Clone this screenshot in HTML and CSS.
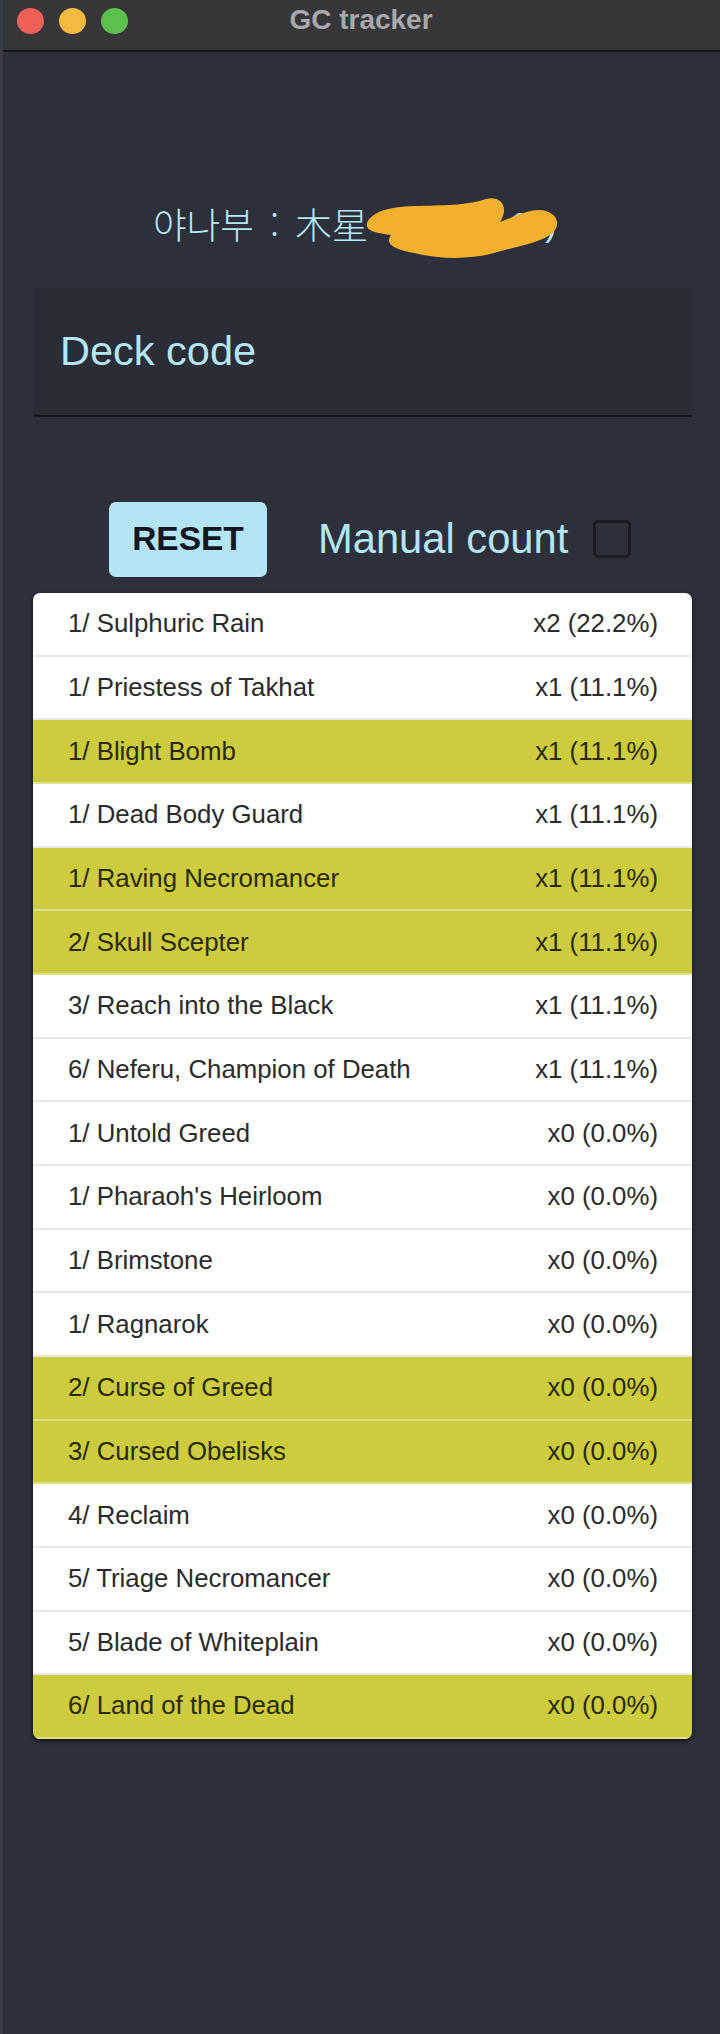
FILE: index.html
```html
<!DOCTYPE html>
<html lang="ko">
<head>
<meta charset="utf-8">
<title>GC tracker</title>
<link rel="stylesheet" href="styles.css">
</head>
<body>
<div class="window">
  <header class="titlebar">
    <div class="lights">
      <span class="light red"></span>
      <span class="light yellow"></span>
      <span class="light green"></span>
    </div>
    <span class="title">GC tracker</span>
  </header>
  <main class="content">
    <div class="player">
      <span class="player-text">야나부 : 木星</span>
      <span class="hidden-name">
        <span class="hidden-peek">11)</span>
        <svg class="scribble" viewBox="0 0 200 62" aria-hidden="true">
          <path d="M3 26C8 14 28 9 55 9C85 8 105 8 122 2C133 -1 141 5 140 15C139 20 137 24 136 25C150 20 168 10 182 14C195 18 197 30 186 38C172 47 150 50 130 56C108 62 80 63 50 56C32 53 20 48 27 38C15 36 1 35 3 26Z" fill="#f3b02c"/>
        </svg>
      </span>
    </div>
    <div class="deck-field"><span class="deck-label">Deck code</span></div>
    <div class="controls">
      <button class="reset" type="button">RESET</button>
      <span class="manual">Manual count</span>
      <span class="checkbox"></span>
    </div>
    <ul class="cards">
      <li class="card"><span>1/ Sulphuric Rain</span><span>x2 (22.2%)</span></li>
      <li class="card"><span>1/ Priestess of Takhat</span><span>x1 (11.1%)</span></li>
      <li class="card hit"><span>1/ Blight Bomb</span><span>x1 (11.1%)</span></li>
      <li class="card"><span>1/ Dead Body Guard</span><span>x1 (11.1%)</span></li>
      <li class="card hit"><span>1/ Raving Necromancer</span><span>x1 (11.1%)</span></li>
      <li class="card hit"><span>2/ Skull Scepter</span><span>x1 (11.1%)</span></li>
      <li class="card"><span>3/ Reach into the Black</span><span>x1 (11.1%)</span></li>
      <li class="card"><span>6/ Neferu, Champion of Death</span><span>x1 (11.1%)</span></li>
      <li class="card"><span>1/ Untold Greed</span><span>x0 (0.0%)</span></li>
      <li class="card"><span>1/ Pharaoh's Heirloom</span><span>x0 (0.0%)</span></li>
      <li class="card"><span>1/ Brimstone</span><span>x0 (0.0%)</span></li>
      <li class="card"><span>1/ Ragnarok</span><span>x0 (0.0%)</span></li>
      <li class="card hit"><span>2/ Curse of Greed</span><span>x0 (0.0%)</span></li>
      <li class="card hit"><span>3/ Cursed Obelisks</span><span>x0 (0.0%)</span></li>
      <li class="card"><span>4/ Reclaim</span><span>x0 (0.0%)</span></li>
      <li class="card"><span>5/ Triage Necromancer</span><span>x0 (0.0%)</span></li>
      <li class="card"><span>5/ Blade of Whiteplain</span><span>x0 (0.0%)</span></li>
      <li class="card hit"><span>6/ Land of the Dead</span><span>x0 (0.0%)</span></li>
    </ul>
  </main>
</div>
</body>
</html>
```
FILE: styles.css
```css
* { box-sizing: border-box; }
html, body { margin: 0; padding: 0; }
body {
  width: 720px;
  height: 2034px;
  overflow: hidden;
  background: #2d2f3a;
  font-family: "Liberation Sans", Arial, "Noto Sans CJK KR", sans-serif;
}
.window {
  height: 2034px;
  display: flex;
  flex-direction: column;
  border-left: 3px solid #3b3d46;
}
.titlebar {
  height: 52px;
  flex: none;
  display: flex;
  align-items: center;
  justify-content: center;
  position: relative;
  background: #373739;
  border-bottom: 2px solid #15161a;
}
.lights {
  position: absolute;
  left: 14px;
  top: 8px;
  display: flex;
  gap: 15px;
}
.light { width: 27px; height: 26px; border-radius: 50%; }
.red { background: #f0605a; }
.yellow { background: #f4b93f; }
.green { background: #5cc04d; }
.title {
  font-size: 28px;
  font-weight: 700;
  color: #a9a9ab;
  margin-left: -1px;
  margin-bottom: 10px;
}
.content {
  flex: 1;
  padding: 0 28px 0 30px;
  display: flex;
  flex-direction: column;
}
.player {
  height: 235px;
  flex: none;
  display: flex;
  justify-content: flex-start;
  align-items: flex-end;
  padding: 0 0 43px 120px;
  color: #b5e9f7;
  font-size: 36.5px;
}
.player-text {
  font-family: "Noto Sans CJK KR", sans-serif;
  font-weight: 300;
  line-height: 40px;
  word-spacing: 6px;
}
.hidden-name { position: relative; width: 194px; height: 40px; }
.hidden-peek { position: absolute; right: 6px; top: 0; line-height: 40px; font-size: 34px; }
.scribble { position: absolute; left: -7px; top: -7px; width: 206px; height: 62px; }
.deck-field {
  height: 129px;
  flex: none;
  margin-top: 1px;
  padding: 35px 27px 0;
  background: #2a2c36;
  border-bottom: 2px solid #15161c;
}
.deck-label { font-size: 41.5px; color: #b5e6f6; line-height: 56px; }
.controls {
  height: 76px;
  flex: none;
  margin-top: 84px;
  display: flex;
  align-items: center;
  padding-left: 76px;
}
.reset {
  width: 158px;
  height: 75px;
  padding: 0;
  border: none;
  border-radius: 7px;
  background: #b3e5f6;
  color: #14181e;
  font: 700 33.5px "Liberation Sans", Arial, sans-serif;
}
.manual { margin-left: 51px; font-size: 41.7px; color: #b5e6f6; }
.checkbox {
  width: 38px;
  height: 38px;
  margin-left: 25px;
  border: 3px solid #191b20;
  border-radius: 5px;
}
.cards {
  list-style: none;
  margin: 16px 0 0;
  padding: 0;
  border-radius: 7px;
  overflow: hidden;
  box-shadow: 0 2px 4px rgba(0, 0, 0, .6);
}
.card {
  height: 63.67px;
  display: flex;
  align-items: center;
  justify-content: space-between;
  padding: 0 34px 0 35px;
  background: #fff;
  color: #2b2b2b;
  font-size: 25.8px;
  border-bottom: 2px solid #e8e8e8;
}
.card.hit { background: #cdcb3e; color: #2b2a08; border-bottom-color: #dfdf8a; }
```
